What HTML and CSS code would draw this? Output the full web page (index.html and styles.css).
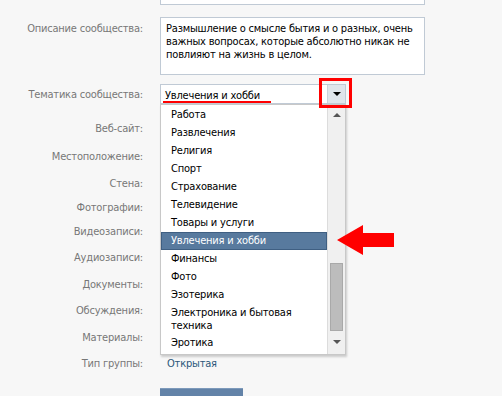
FILE: index.html
```html
<!DOCTYPE html>
<html lang="ru">
<head>
    <meta charset="UTF-8">
    <title>Редактирование сообщества</title>
    <link rel="stylesheet" href="styles.css">
</head>
<body>

  <div class="form">
    <div class="label row-addr">Адрес страницы:</div>
    <div class="field row-addr">
      <div class="input">http://vk.com/my_filosophya</div>
    </div>

    <div class="label row-desc">Описание сообщества:</div>
    <div class="field row-desc">
      <div class="textarea">Размышление о смысле бытия и о разных, очень важных вопросах, которые абсолютно никак не повлияют на жизнь в целом.</div>
    </div>

    <div class="label row-theme">Тематика сообщества:</div>
    <div class="field row-theme">
      <div class="select">
        <span class="select-value">Увлечения и хобби</span>
        <span class="select-btn"><span class="tri-down"></span></span>

        <div class="dropdown">
          <ul class="options">
            <li>Работа</li>
            <li>Развлечения</li>
            <li>Религия</li>
            <li>Спорт</li>
            <li>Страхование</li>
            <li>Телевидение</li>
            <li>Товары и услуги</li>
            <li class="selected">Увлечения и хобби</li>
            <li>Финансы</li>
            <li>Фото</li>
            <li>Эзотерика</li>
            <li class="wrap">Электроника и бытовая техника</li>
            <li>Эротика</li>
          </ul>
          <div class="scrollbar">
            <span class="tri-up"></span>
            <span class="thumb"></span>
            <span class="tri-down grey"></span>
          </div>
        </div>

        <!-- пометки поверх скриншота -->
        <span class="mark-line"></span>
        <span class="mark-box"></span>
        <svg class="mark-arrow" width="57" height="31" viewBox="0 0 57 31">
          <polygon points="0,15 26,0 26,8 57,8 57,22 26,22 26,30" fill="#ff0000"/>
        </svg>
      </div>
    </div>

    <div class="label row-h28">Веб-сайт:</div>
    <div class="field row-h28"></div>
    <div class="label row-h27">Местоположение:</div>
    <div class="field row-h27"></div>
    <div class="label row-h24">Стена:</div>
    <div class="field row-h24"></div>
    <div class="label row-h24">Фотографии:</div>
    <div class="field row-h24"></div>
    <div class="label row-h26">Видеозаписи:</div>
    <div class="field row-h26"></div>
    <div class="label row-h27">Аудиозаписи:</div>
    <div class="field row-h27"></div>
    <div class="label row-h26">Документы:</div>
    <div class="field row-h26"></div>
    <div class="label row-h27">Обсуждения:</div>
    <div class="field row-h27"></div>
    <div class="label row-h26">Материалы:</div>
    <div class="field row-h26"></div>
    <div class="label row-h31">Тип группы:</div>
    <div class="field row-h31"><span class="group-type">Открытая</span></div>

    <div class="label"></div>
    <div class="field"><div class="button">Сохранить</div></div>
  </div>

</body>
</html>
```

FILE: styles.css
```css
html, body {
  margin: 0;
  overflow: hidden;
  background-color: #f7f7f7;
}

body {
  font-family: "DejaVu Sans Condensed", "Liberation Sans", sans-serif;
  font-size: 11px;
  letter-spacing: -0.2px;
  color: #000;
}

.form {
  display: grid;
  grid-template-columns: 143px 265px;
  column-gap: 17px;
  margin-top: -17px;
}

.label {
  color: #777;
  text-align: right;
  line-height: 14px;
  white-space: nowrap;
}

.row-addr { height: 34px; }
.row-desc { height: 67px; }
.row-theme { height: 38px; }
.row-h24 { height: 24px; }
.row-h26 { height: 26px; }
.row-h27 { height: 27px; }
.row-h28 { height: 28px; }
.row-h31 { height: 31px; }

.label.row-addr { padding-top: 4px; box-sizing: border-box; }
.label.row-desc { padding-top: 5px; box-sizing: border-box; }
.label.row-theme { padding-top: 4px; box-sizing: border-box; }

.input {
  height: 22px;
  box-sizing: border-box;
  border: 1px solid #c0cad5;
  background: #fff;
  padding: 3px 5px;
  line-height: 14px;
  color: #555;
}

.textarea {
  height: 58px;
  box-sizing: border-box;
  border: 1px solid #c0cad5;
  background: #fff;
  padding: 4px 4px 0 5px;
  line-height: 13px;
}

.select {
  position: relative;
  width: 186px;
  height: 20px;
  box-sizing: border-box;
  border: 1px solid #c0cad5;
  background: #fff;
  display: flex;
}

.select-value {
  flex: 1;
  padding: 4px 0 0 4px;
  line-height: 14px;
}

.select-btn {
  width: 17px;
  background: #dfe5eb;
  border-left: 1px solid #ccd3da;
  display: flex;
  align-items: center;
  justify-content: center;
}

.tri-down {
  width: 0;
  height: 0;
  border-left: 4px solid transparent;
  border-right: 4px solid transparent;
  border-top: 4px solid #000;
}

.tri-down.grey {
  border-top-color: #555;
}

.tri-up {
  width: 0;
  height: 0;
  border-left: 4px solid transparent;
  border-right: 4px solid transparent;
  border-bottom: 4px solid #555;
}

.dropdown {
  position: absolute;
  top: 19px;
  left: -1px;
  width: 186px;
  height: 251px;
  box-sizing: border-box;
  border: 1px solid #c8c8c8;
  background: #fff;
  display: flex;
  box-shadow: 1px 2px 2px rgba(0, 0, 0, 0.18);
  z-index: 2;
}

.options {
  list-style: none;
  margin: 0;
  padding: 1px 0 0 0;
  flex: 1;
}

.options li {
  padding: 2px 0 2px 10px;
  line-height: 14px;
}

.options li.wrap {
  line-height: 13px;
  padding-right: 30px;
}

.options li.selected {
  background: #587a9e;
  color: #fff;
  border: 1px solid #3f5f82;
  padding: 1px 0 1px 9px;
}

.scrollbar {
  width: 17px;
  background: #f0f0f0;
  border-left: 1px solid #dcdcdc;
  display: flex;
  flex-direction: column;
  align-items: center;
  padding: 8px 0 7px 0;
}

.thumb {
  width: 11px;
  height: 66px;
  margin: 146px 0 9px 0;
  background: #bcbcbc;
  border: 1px solid #a9a9a9;
}

.mark-line {
  position: absolute;
  left: 2px;
  top: 16px;
  width: 108px;
  height: 2px;
  background: #f00;
  z-index: 3;
}

.mark-box {
  position: absolute;
  left: 158px;
  top: -7px;
  width: 33px;
  height: 30px;
  box-sizing: border-box;
  border: 3px solid #f00;
  z-index: 3;
}

.mark-arrow {
  position: absolute;
  left: 176px;
  top: 140px;
  z-index: 3;
}

.group-type {
  display: block;
  padding: 0 0 0 7px;
  line-height: 14px;
  color: #2b587a;
}

.button {
  width: 83px;
  height: 25px;
  background: #6383a8;
  border-top: 1px solid #7d9abb;
  color: #fff;
  text-align: center;
  line-height: 34px;
}
```
